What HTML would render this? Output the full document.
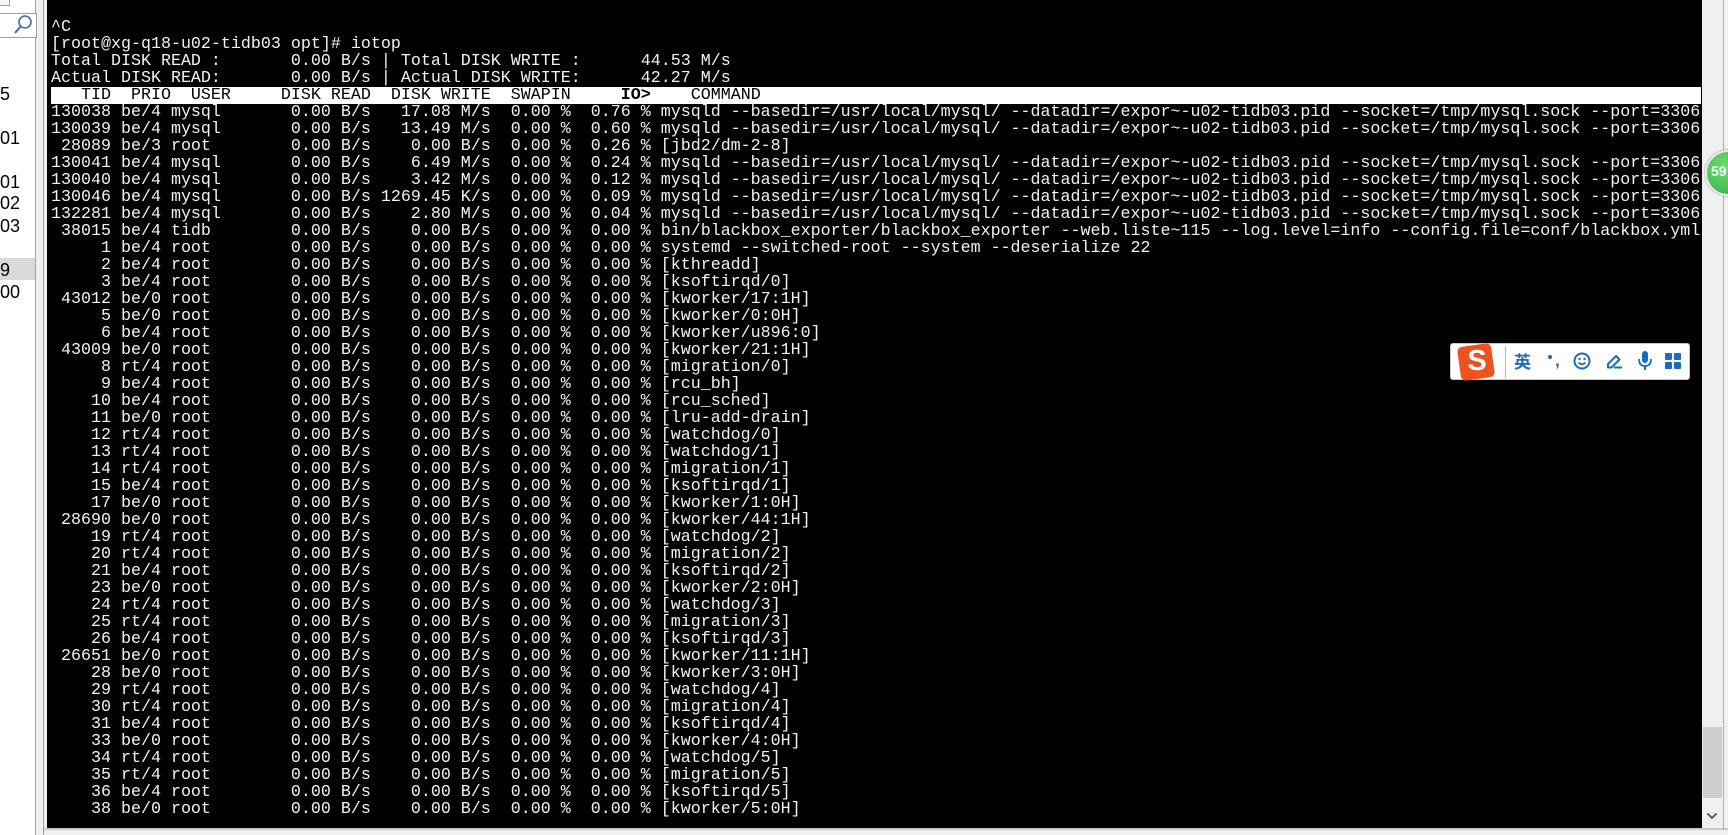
<!DOCTYPE html>
<html><head><meta charset="utf-8"><style>
*{margin:0;padding:0;box-sizing:border-box}
body{width:1728px;height:835px;overflow:hidden;background:#f0f0f0;position:relative;font-family:"Liberation Sans",sans-serif}
.abs{position:absolute}
#left{left:0;top:0;width:36px;height:835px;background:#fff;border-right:1px solid #a0a0a0}
#term{left:47px;top:0;width:1655px;height:828px;background:#000;overflow:hidden}
pre{position:absolute;left:4px;top:19px;font-family:"Liberation Mono",monospace;font-size:16.667px;line-height:17px;color:#f2f2f2;white-space:pre}
.hd{background:#fff;color:#000;display:inline-block;width:1650px}
.li{position:absolute;left:0;font-size:18px;color:#000;line-height:22px}
</style></head><body>
<div id="left" class="abs">
  <div class="abs" style="left:-2px;top:-2px;width:12px;height:8px;border:1px solid #a0a0a0;background:#f6f6f6"></div>
  <div class="abs" style="left:-2px;top:13px;width:39px;height:25px;border:1px solid #a0a0a0;background:#fff"></div>
  <svg class="abs" style="left:13px;top:14px" width="20" height="22" viewBox="0 0 20 22"><circle cx="12" cy="8" r="6" fill="none" stroke="#3f6fa0" stroke-width="1.6"/><line x1="7.5" y1="12.5" x2="2" y2="19" stroke="#3f6fa0" stroke-width="2"/></svg>
  <div class="li" style="top:83px">5</div>
  <div class="li" style="top:127px">01</div>
  <div class="li" style="top:171px">01</div>
  <div class="li" style="top:192px">02</div>
  <div class="li" style="top:215px">03</div>
  <div class="abs" style="left:0;top:258px;width:35px;height:22px;background:#d9d9d9"></div>
  <div class="li" style="top:259px">9</div>
  <div class="li" style="top:281px">00</div>
</div>
<div class="abs" style="left:43px;top:0;width:1px;height:835px;background:#a0a0a0"></div>
<div class="abs" style="left:44px;top:828px;width:1684px;height:2px;background:#c8c8c8"></div>
<div id="term" class="abs"><pre>^C
[root@xg-q18-u02-tidb03 opt]# iotop
Total DISK READ :       0.00 B/s | Total DISK WRITE :      44.53 M/s
Actual DISK READ:       0.00 B/s | Actual DISK WRITE:      42.27 M/s
<span class="hd">   TID  PRIO  USER     DISK READ  DISK WRITE  SWAPIN     <b>IO&gt;</b>    COMMAND</span>
130038 be/4 mysql       0.00 B/s   17.08 M/s  0.00 %  0.76 % mysqld --basedir=/usr/local/mysql/ --datadir=/expor~-u02-tidb03.pid --socket=/tmp/mysql.sock --port=3306
130039 be/4 mysql       0.00 B/s   13.49 M/s  0.00 %  0.60 % mysqld --basedir=/usr/local/mysql/ --datadir=/expor~-u02-tidb03.pid --socket=/tmp/mysql.sock --port=3306
 28089 be/3 root        0.00 B/s    0.00 B/s  0.00 %  0.26 % [jbd2/dm-2-8]
130041 be/4 mysql       0.00 B/s    6.49 M/s  0.00 %  0.24 % mysqld --basedir=/usr/local/mysql/ --datadir=/expor~-u02-tidb03.pid --socket=/tmp/mysql.sock --port=3306
130040 be/4 mysql       0.00 B/s    3.42 M/s  0.00 %  0.12 % mysqld --basedir=/usr/local/mysql/ --datadir=/expor~-u02-tidb03.pid --socket=/tmp/mysql.sock --port=3306
130046 be/4 mysql       0.00 B/s 1269.45 K/s  0.00 %  0.09 % mysqld --basedir=/usr/local/mysql/ --datadir=/expor~-u02-tidb03.pid --socket=/tmp/mysql.sock --port=3306
132281 be/4 mysql       0.00 B/s    2.80 M/s  0.00 %  0.04 % mysqld --basedir=/usr/local/mysql/ --datadir=/expor~-u02-tidb03.pid --socket=/tmp/mysql.sock --port=3306
 38015 be/4 tidb        0.00 B/s    0.00 B/s  0.00 %  0.00 % bin/blackbox_exporter/blackbox_exporter --web.liste~115 --log.level=info --config.file=conf/blackbox.yml
     1 be/4 root        0.00 B/s    0.00 B/s  0.00 %  0.00 % systemd --switched-root --system --deserialize 22
     2 be/4 root        0.00 B/s    0.00 B/s  0.00 %  0.00 % [kthreadd]
     3 be/4 root        0.00 B/s    0.00 B/s  0.00 %  0.00 % [ksoftirqd/0]
 43012 be/0 root        0.00 B/s    0.00 B/s  0.00 %  0.00 % [kworker/17:1H]
     5 be/0 root        0.00 B/s    0.00 B/s  0.00 %  0.00 % [kworker/0:0H]
     6 be/4 root        0.00 B/s    0.00 B/s  0.00 %  0.00 % [kworker/u896:0]
 43009 be/0 root        0.00 B/s    0.00 B/s  0.00 %  0.00 % [kworker/21:1H]
     8 rt/4 root        0.00 B/s    0.00 B/s  0.00 %  0.00 % [migration/0]
     9 be/4 root        0.00 B/s    0.00 B/s  0.00 %  0.00 % [rcu_bh]
    10 be/4 root        0.00 B/s    0.00 B/s  0.00 %  0.00 % [rcu_sched]
    11 be/0 root        0.00 B/s    0.00 B/s  0.00 %  0.00 % [lru-add-drain]
    12 rt/4 root        0.00 B/s    0.00 B/s  0.00 %  0.00 % [watchdog/0]
    13 rt/4 root        0.00 B/s    0.00 B/s  0.00 %  0.00 % [watchdog/1]
    14 rt/4 root        0.00 B/s    0.00 B/s  0.00 %  0.00 % [migration/1]
    15 be/4 root        0.00 B/s    0.00 B/s  0.00 %  0.00 % [ksoftirqd/1]
    17 be/0 root        0.00 B/s    0.00 B/s  0.00 %  0.00 % [kworker/1:0H]
 28690 be/0 root        0.00 B/s    0.00 B/s  0.00 %  0.00 % [kworker/44:1H]
    19 rt/4 root        0.00 B/s    0.00 B/s  0.00 %  0.00 % [watchdog/2]
    20 rt/4 root        0.00 B/s    0.00 B/s  0.00 %  0.00 % [migration/2]
    21 be/4 root        0.00 B/s    0.00 B/s  0.00 %  0.00 % [ksoftirqd/2]
    23 be/0 root        0.00 B/s    0.00 B/s  0.00 %  0.00 % [kworker/2:0H]
    24 rt/4 root        0.00 B/s    0.00 B/s  0.00 %  0.00 % [watchdog/3]
    25 rt/4 root        0.00 B/s    0.00 B/s  0.00 %  0.00 % [migration/3]
    26 be/4 root        0.00 B/s    0.00 B/s  0.00 %  0.00 % [ksoftirqd/3]
 26651 be/0 root        0.00 B/s    0.00 B/s  0.00 %  0.00 % [kworker/11:1H]
    28 be/0 root        0.00 B/s    0.00 B/s  0.00 %  0.00 % [kworker/3:0H]
    29 rt/4 root        0.00 B/s    0.00 B/s  0.00 %  0.00 % [watchdog/4]
    30 rt/4 root        0.00 B/s    0.00 B/s  0.00 %  0.00 % [migration/4]
    31 be/4 root        0.00 B/s    0.00 B/s  0.00 %  0.00 % [ksoftirqd/4]
    33 be/0 root        0.00 B/s    0.00 B/s  0.00 %  0.00 % [kworker/4:0H]
    34 rt/4 root        0.00 B/s    0.00 B/s  0.00 %  0.00 % [watchdog/5]
    35 rt/4 root        0.00 B/s    0.00 B/s  0.00 %  0.00 % [migration/5]
    36 be/4 root        0.00 B/s    0.00 B/s  0.00 %  0.00 % [ksoftirqd/5]
    38 be/0 root        0.00 B/s    0.00 B/s  0.00 %  0.00 % [kworker/5:0H]</pre></div>
<div class="abs" style="left:1702px;top:0;width:21px;height:828px;background:#f0f0f0"></div>
<div class="abs" style="left:1703px;top:727px;width:19px;height:71px;background:#cdcdcd"></div>
<svg class="abs" style="left:1706px;top:812px" width="12" height="9" viewBox="0 0 12 9"><path d="M1.5 1.5 L6 6 L10.5 1.5" fill="none" stroke="#606060" stroke-width="2"/></svg>
<div class="abs" style="left:1723px;top:0;width:1px;height:830px;background:#b0b0b0"></div>
<div class="abs" style="left:1705px;top:150px;width:46px;height:46px;border-radius:50%;background:radial-gradient(circle at 40% 35%,#6ddb74,#2fb043);border:2px solid #e8e8e8;box-shadow:0 0 2px #888"></div>
<div class="abs" style="left:1711px;top:163px;font-size:14px;font-weight:bold;color:#fff">59</div>
<div class="abs" style="left:1450px;top:343px;width:240px;height:37px;background:#fff;border:1px solid #c8c8c8;border-radius:3px"></div>
<div class="abs" style="left:1459px;top:345px;width:34px;height:34px;background:#f0521e;border-radius:5px;transform:rotate(-8deg)"></div>
<div class="abs" style="left:1463px;top:343px;width:28px;font-size:29px;font-weight:bold;color:#fff;text-align:center;line-height:36px">S</div>
<div class="abs" style="left:1505px;top:346px;width:1px;height:32px;background:#f3a090"></div>
<div class="abs" style="left:1514px;top:350px;font-family:'Noto Sans CJK SC',sans-serif;font-size:17px;font-weight:bold;color:#1a6ac8;line-height:22px">英</div>
<div class="abs" style="left:1548px;top:355px;width:4px;height:4px;border-radius:50%;background:#1a6ac8"></div>
<div class="abs" style="left:1555px;top:351px;font-size:17px;font-weight:bold;color:#1a6ac8">,</div>
<svg class="abs" style="left:1573px;top:352px" width="18" height="18" viewBox="0 0 18 18"><circle cx="9" cy="9" r="7.5" fill="none" stroke="#1a6ac8" stroke-width="2"/><circle cx="6.5" cy="7" r="1.2" fill="#1a6ac8"/><circle cx="11.5" cy="7" r="1.2" fill="#1a6ac8"/><path d="M5.5 10.5 Q9 14 12.5 10.5" fill="none" stroke="#1a6ac8" stroke-width="1.6"/></svg>
<svg class="abs" style="left:1605px;top:352px" width="18" height="18" viewBox="0 0 18 18"><path d="M3 12 L11 4 L14.5 7.5 L6.5 15.5 L3 15.5 Z" fill="none" stroke="#1a6ac8" stroke-width="2" stroke-linejoin="round"/><line x1="9" y1="15.5" x2="17" y2="15.5" stroke="#1a6ac8" stroke-width="2"/></svg>
<svg class="abs" style="left:1637px;top:350px" width="16" height="22" viewBox="0 0 16 22"><rect x="5" y="1" width="6" height="12" rx="3" fill="#1a6ac8"/><path d="M2 9 Q2 16 8 16 Q14 16 14 9" fill="none" stroke="#1a6ac8" stroke-width="1.8"/><line x1="8" y1="16" x2="8" y2="20" stroke="#1a6ac8" stroke-width="2"/></svg>
<svg class="abs" style="left:1665px;top:353px" width="16" height="16" viewBox="0 0 16 16"><rect x="0" y="0" width="7" height="7" rx="1" fill="#1a6ac8"/><rect x="9" y="0" width="7" height="7" rx="1" fill="#1a6ac8"/><rect x="0" y="9" width="7" height="7" rx="1" fill="#1a6ac8"/><rect x="9" y="9" width="7" height="7" rx="1" fill="#1a6ac8"/></svg>
</body></html>
